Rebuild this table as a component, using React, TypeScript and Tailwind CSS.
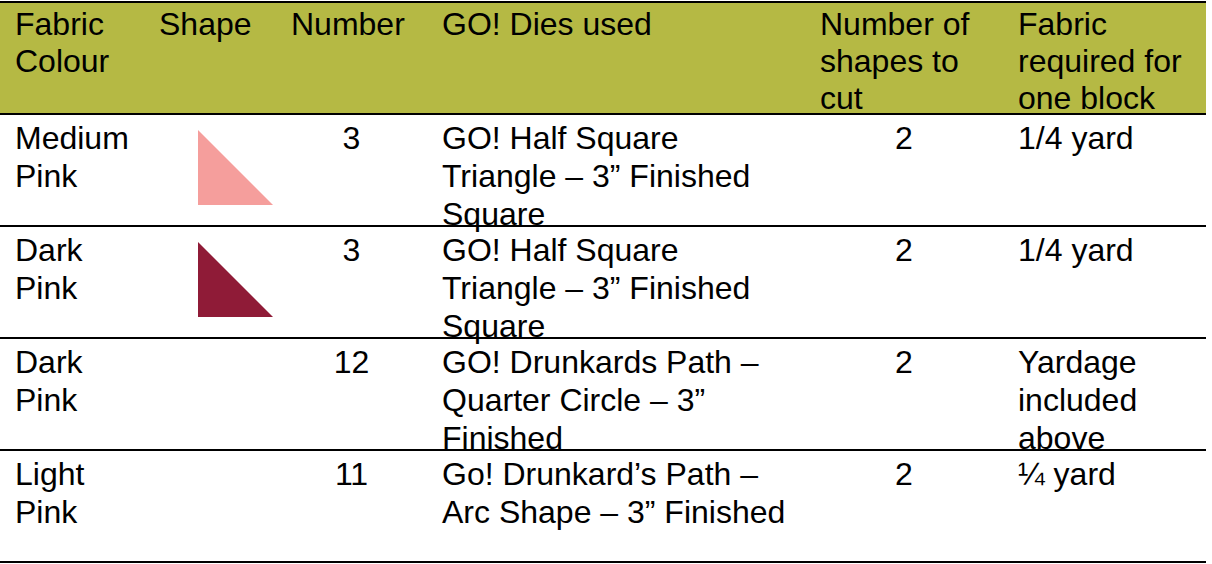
import React from 'react';

type Row = {
    colour: string[];
    shape?: string;
    number: string;
    dies: string[];
    count: string;
    fabric: string[];
};

const rows: Row[] = [
    { colour: ['Medium', 'Pink'], shape: '#f59e9c', number: '3', dies: ['GO! Half Square', 'Triangle – 3” Finished', 'Square'], count: '2', fabric: ['1/4 yard'] },
    { colour: ['Dark', 'Pink'], shape: '#8f1b37', number: '3', dies: ['GO! Half Square', 'Triangle – 3” Finished', 'Square'], count: '2', fabric: ['1/4 yard'] },
    { colour: ['Dark', 'Pink'], number: '12', dies: ['GO! Drunkards Path –', 'Quarter Circle – 3”', 'Finished'], count: '2', fabric: ['Yardage', 'included', 'above'] },
    { colour: ['Light', 'Pink'], number: '11', dies: ['Go! Drunkard’s Path –', 'Arc Shape – 3” Finished'], count: '2', fabric: ['¼ yard'] },
];

const Lines: React.FC<{ lines: string[] }> = ({ lines }) => (
    <>
        {lines.map((l, i) => (
            <div key={i} className="whitespace-nowrap">{l}</div>
        ))}
    </>
);

const cols = 'grid grid-cols-[144px_132px_151px_378px_198px_203px]';

const App: React.FC = () => {
    return (
        <div className="w-[1212px] h-[564px] bg-white pt-px text-black text-[32px] font-['Liberation_Sans',Arial,sans-serif]">
            <div className="w-[1206px] border-t-2 border-black">
                <div className={`${cols} h-[112px] bg-[#b5b944] border-b-2 border-black leading-[36.8px] pt-[3px]`}>
                    <div className="px-[15px]"><Lines lines={['Fabric', 'Colour']} /></div>
                    <div className="px-[15px]">Shape</div>
                    <div className="px-[15px]">Number</div>
                    <div className="px-[15px]">GO! Dies used</div>
                    <div className="px-[15px]"><Lines lines={['Number of', 'shapes to', 'cut']} /></div>
                    <div className="px-[15px]"><Lines lines={['Fabric', 'required for', 'one block']} /></div>
                </div>
                {rows.map((r, i) => (
                    <div key={i} className={`${cols} h-[112px] border-b-2 border-black leading-[38px] pt-[4px]`}>
                        <div className="px-[15px]"><Lines lines={r.colour} /></div>
                        <div className="pt-[11px] pl-[54px]">
                            {r.shape && (
                                <svg width="75" height="75" viewBox="0 0 75 75" className="block">
                                    <polygon points="0,0 0,75 75,75" fill={r.shape} />
                                </svg>
                            )}
                        </div>
                        <div className="px-[15px] text-center">{r.number}</div>
                        <div className="px-[15px]"><Lines lines={r.dies} /></div>
                        <div className="px-[15px] text-center">{r.count}</div>
                        <div className="px-[15px]"><Lines lines={r.fabric} /></div>
                    </div>
                ))}
            </div>
        </div>
    );
};

export default App;
